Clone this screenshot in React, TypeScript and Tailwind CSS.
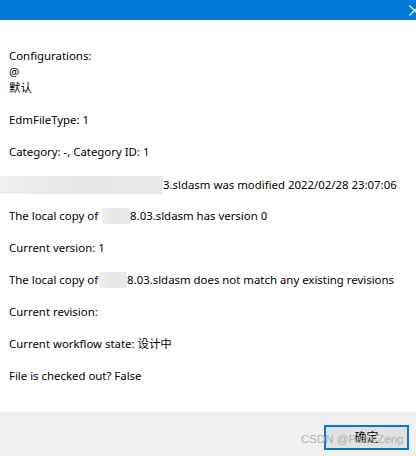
const font = { fontFamily: '"Noto Sans", "Noto Sans CJK SC", sans-serif' };

function Blur({ className }: { className: string }) {
  return <span className={`inline-block align-middle bg-gradient-to-r from-[#efefef] via-[#e6e6e6] to-[#e9e9e9] ${className}`} />;
}

const lines: React.ReactNode[] = [
  "Configurations:",
  "@",
  "默认",
  "",
  "EdmFileType: 1",
  "",
  "Category: -, Category ID: 1",
  "",
  <span className="flex items-center -ml-[9px]">
    <Blur className="w-[163px] h-[18px]" />
    <span>3.sldasm was modified 2022/02/28 23:07:06</span>
  </span>,
  "",
  <span className="flex items-center">
    <span>The local copy of</span>
    <Blur className="w-[28px] h-[16px] ml-[4px]" />
    <span>8.03.sldasm has version 0</span>
  </span>,
  "",
  "Current version: 1",
  "",
  <span className="flex items-center">
    <span>The local copy of</span>
    <Blur className="w-[28px] h-[16px] ml-[1px]" />
    <span>8.03.sldasm does not match any existing revisions</span>
  </span>,
  "",
  "Current revision:",
  "",
  "Current workflow state: 设计中",
  "",
  "File is checked out? False",
];

export default function App() {
  return (
    <div className="w-[416px] h-[456px] bg-white flex flex-col overflow-hidden" style={font}>
      <div className="h-[20px] bg-[#0078d7] relative overflow-hidden shrink-0">
        <svg className="absolute left-[409px] top-[5px]" width="11" height="11" viewBox="0 0 11 11">
          <path d="M0.5 0.5 L10.5 10.5 M10.5 0.5 L0.5 10.5" stroke="white" strokeWidth="1.2" fill="none" />
        </svg>
      </div>

      <div className="flex-1 pt-[28px] pl-[9px] text-[11.4px] leading-[16px] text-black">
        {lines.map((l, i) => (
          <div key={i} className="h-[16px] whitespace-nowrap">
            {l}
          </div>
        ))}
      </div>

      <div className="h-[44px] bg-[#f0f0f0] shrink-0 relative flex items-start justify-end pt-[13px] pr-[7px]">
        <button className="w-[85px] h-[25px] border-2 border-[#0078d7] bg-[#e1e1e1] text-[12px] text-black flex items-center justify-center">
          确定
        </button>
        <span
          className="absolute z-10 left-[301px] top-[20px] text-[11.5px] leading-[14px] whitespace-nowrap text-[#b0b0b0] pointer-events-none"
          style={{ fontFamily: '"Liberation Sans", sans-serif' }}
        >
          CSDN @PanisZeng
        </span>
      </div>
    </div>
  );
}
